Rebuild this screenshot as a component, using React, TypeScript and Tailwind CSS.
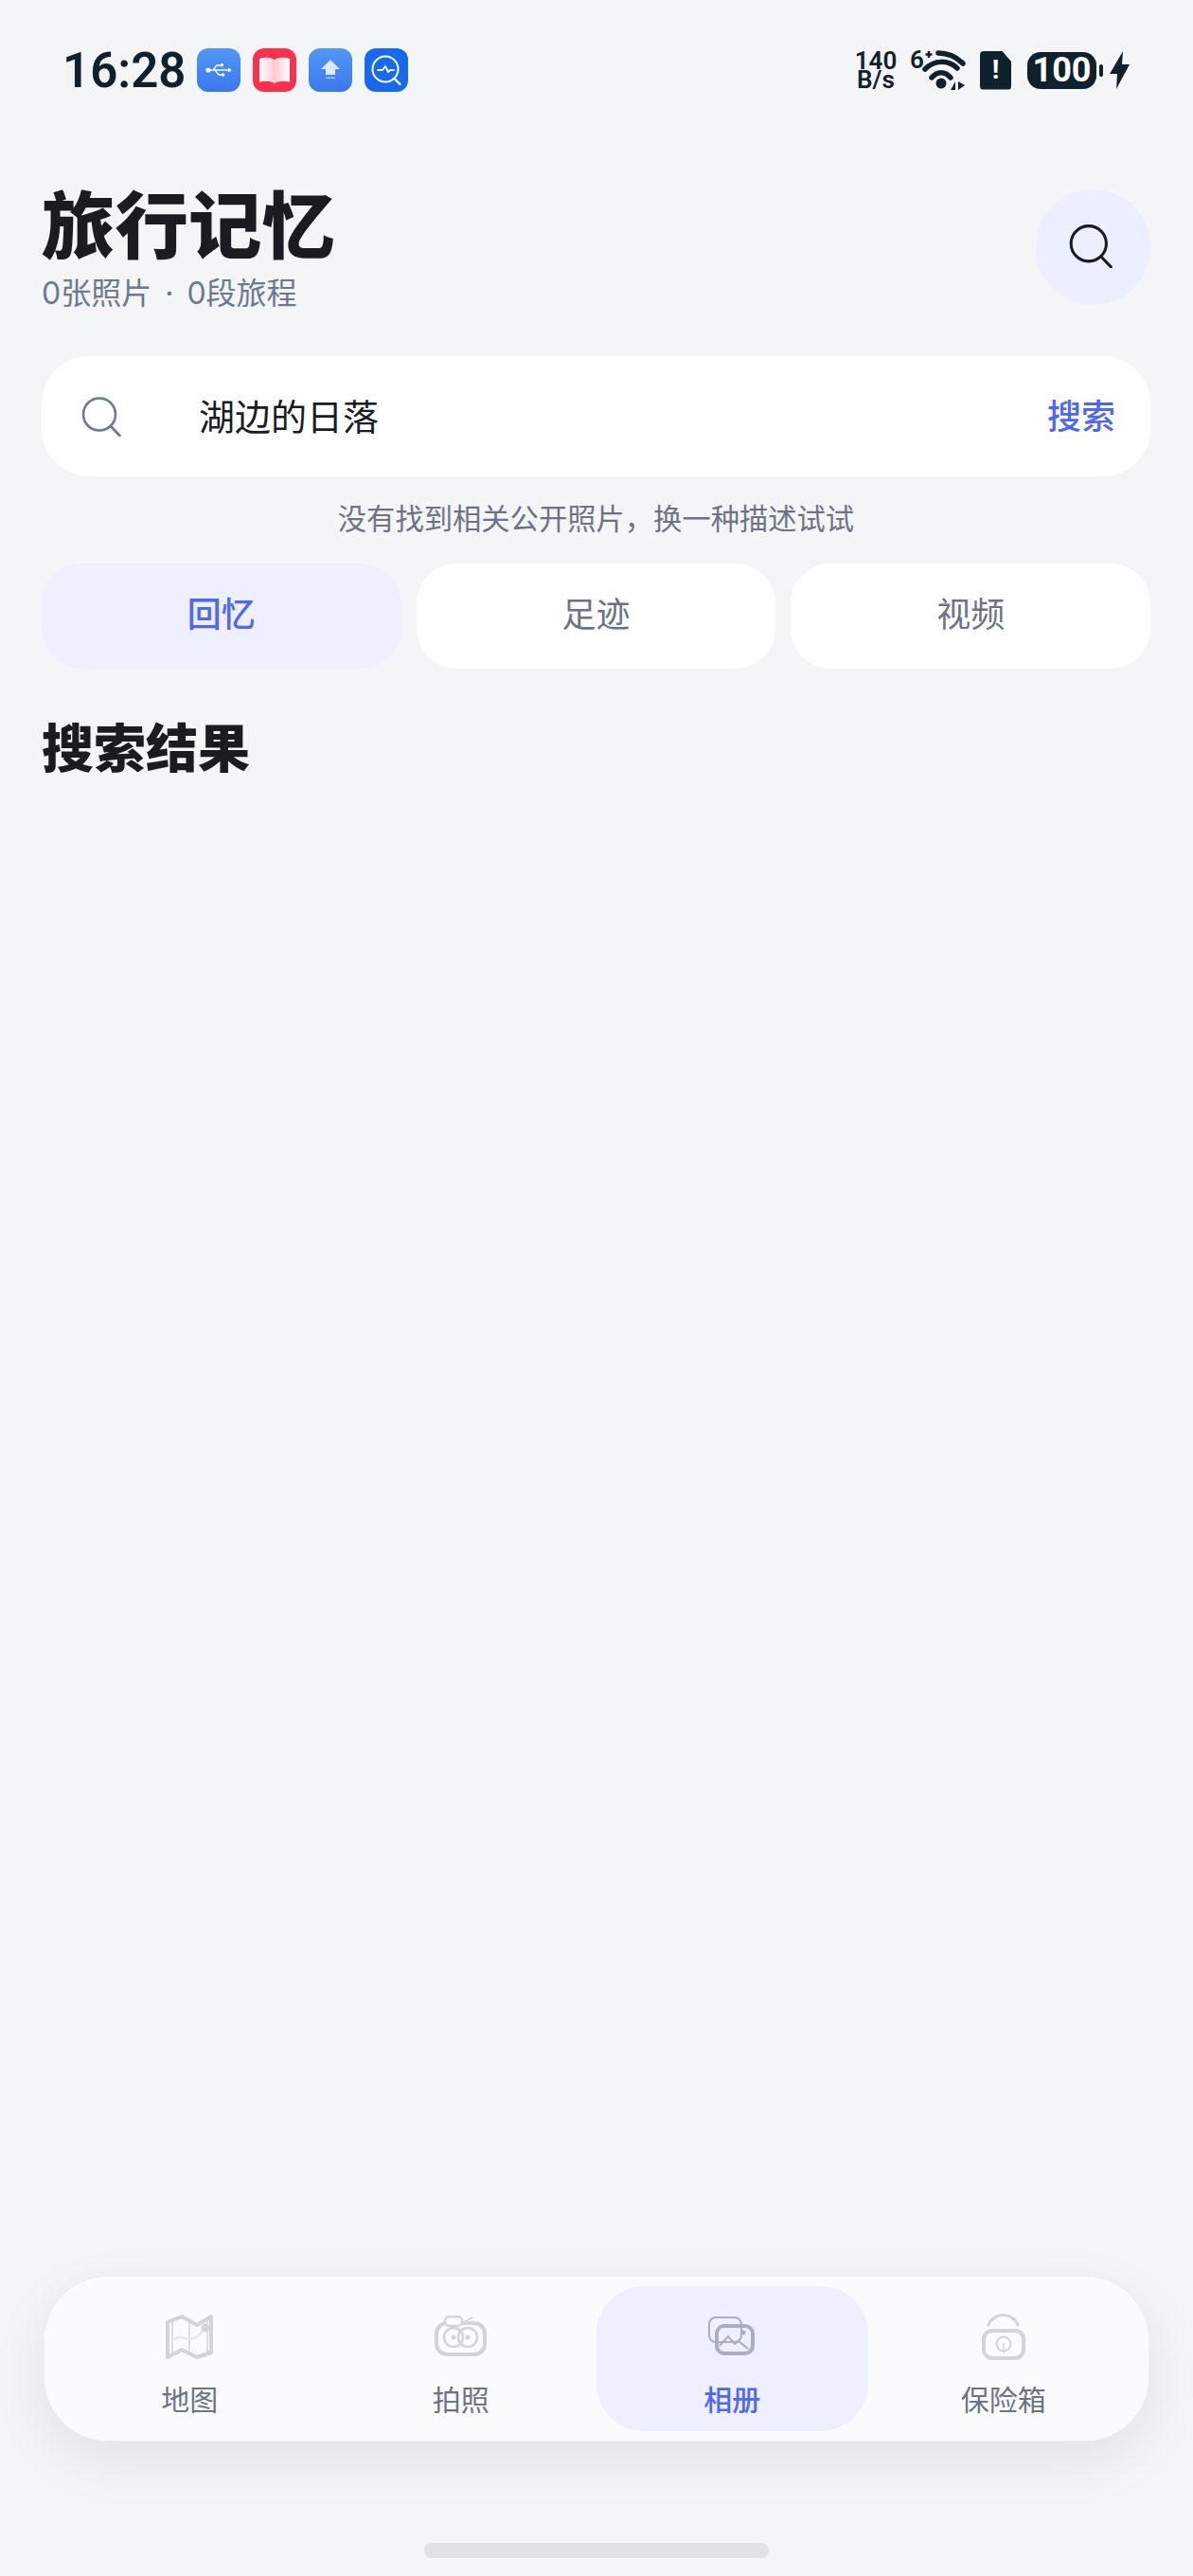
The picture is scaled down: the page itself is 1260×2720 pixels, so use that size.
const sans = `font-['Inter','Noto_Sans_CJK_SC',sans-serif]`

function SearchIcon({ className, strokeWidth = 2.6 }: { className: string; strokeWidth?: number }) {
  return (
    <svg viewBox="0 0 42 42" fill="none" stroke="currentColor" strokeWidth={strokeWidth} strokeLinecap="round" className={className}>
      <ellipse cx="19" cy="18.5" rx="17" ry="17" />
      <path d="M31 31 L40.5 41" />
    </svg>
  )
}

function StatusBar() {
  return (
    <div className="flex h-[148px] items-center justify-between pr-[67px] pl-[66px] text-[#10212e]">
      <div className="flex items-center">
        <span className="w-[142px] font-['Roboto',sans-serif] text-[51px] leading-none font-semibold">16:28</span>
        <div className="flex gap-[13px]">
          <div className="flex h-[46px] w-[46px] items-center justify-center rounded-[12px] bg-gradient-to-b from-[#5097f5] to-[#3b78ee]">
            <svg viewBox="0 0 28 16" className="w-[28px]" fill="#fff">
              <circle cx="3" cy="8" r="2.6" />
              <path d="M3 7.3h22v1.4H3z" />
              <path d="M28 8l-4-2.4v4.8z" />
              <path d="M8 8l4-5h4" fill="none" stroke="#fff" strokeWidth="1.3" />
              <path d="M10 8l4 5h3" fill="none" stroke="#fff" strokeWidth="1.3" />
              <rect x="16" y="1.3" width="3" height="3" />
              <circle cx="18.5" cy="13" r="1.8" />
            </svg>
          </div>
          <div className="flex h-[46px] w-[46px] items-center justify-center rounded-[12px] bg-[#fb3050]">
            <svg viewBox="0 0 34 30" className="w-[34px]">
              <defs>
                <linearGradient id="pageLeft" x1="0" x2="1" y1="0" y2="0">
                  <stop offset="0" stopColor="#fff" />
                  <stop offset="1" stopColor="#ffc9d3" />
                </linearGradient>
                <linearGradient id="pageRight" x1="0" x2="1" y1="0" y2="0">
                  <stop offset="0" stopColor="#ffc9d3" />
                  <stop offset="1" stopColor="#fff" />
                </linearGradient>
              </defs>
              <path d="M1 3c6-2 12-1.5 16 1v25c-4-2.5-10-3-16-1.5z" fill="url(#pageLeft)" />
              <path d="M33 3c-6-2-12-1.5-16 1v25c4-2.5 10-3 16-1.5z" fill="url(#pageRight)" />
            </svg>
          </div>
          <div className="flex h-[46px] w-[46px] items-center justify-center rounded-[12px] bg-gradient-to-b from-[#5097f5] to-[#3b78ee]">
            <svg viewBox="0 0 20 22" className="w-[20px]">
              <path d="M10 0L20 10h-5v6H5v-6H0z" fill="#dceafe" />
              <path d="M5 18.5h10V20H5z" fill="#a9c8fa" />
            </svg>
          </div>
          <div className="flex h-[46px] w-[46px] items-center justify-center rounded-[12px] bg-[#1769f2]">
            <svg viewBox="0 0 34 34" className="w-[34px]" fill="none" stroke="#fff" strokeLinecap="round" strokeLinejoin="round">
              <circle cx="16" cy="16" r="13.5" strokeWidth="2" />
              <path d="M25.5 26l6 6" strokeWidth="2.4" />
              <path d="M8 17h5l3-4 3 6 2-2h4" strokeWidth="1.8" />
            </svg>
          </div>
        </div>
      </div>

      <div className="flex items-center">
        <div className="flex w-[46px] flex-col items-center font-['Roboto',sans-serif] text-[26px] leading-[20px] font-semibold">
          <span>140</span>
          <span>B/s</span>
        </div>
        <svg viewBox="0 0 60 44" className="ml-[12px] h-[44px] w-[60px] overflow-visible" fill="none" stroke="#10212e" strokeLinecap="round">
          <path d="M31 4c10 0 19 4 26 11" strokeWidth="5.5" />
          <path d="M17 21c10-10 24-10 34-1" strokeWidth="5.5" />
          <path d="M24 30c6-7 14-7 20 0" strokeWidth="5.5" />
          <circle cx="34" cy="36" r="5.5" fill="#10212e" stroke="none" />
          <path d="M44 43l5-9v9zM52 34v9l7-5z" fill="#10212e" stroke="none" />
          <text x="1" y="20" fill="#10212e" stroke="none" fontSize="26" fontWeight="600" fontFamily="Roboto">6</text>
          <path d="M21 2v7M17.5 5.5h7" strokeWidth="2.5" strokeLinecap="butt" />
        </svg>
        <div className="ml-[15px] flex h-[41px] w-[33px] items-center justify-center rounded-[4px] bg-[#10212e] [clip-path:polygon(0_0,70%_0,100%_28%,100%_100%,0_100%)]">
          <span className="font-['Roboto',sans-serif] text-[28px] leading-none font-bold text-white">!</span>
        </div>
        <div className="ml-[17px] flex h-[39px] w-[73px] items-center justify-center rounded-[14px] bg-[#10212e] font-['Roboto',sans-serif] text-[36px] leading-none font-bold text-white">
          100
        </div>
        <div className="ml-[3px] h-[13px] w-[4px] rounded-[2px] bg-[#10212e]" />
        <svg viewBox="0 0 21 40" className="ml-[7px] h-[40px] w-[21px]" fill="#10212e">
          <path d="M14 0L0 24h8L7 40l14-26h-8z" />
        </svg>
      </div>
    </div>
  )
}

function MapIcon() {
  return (
    <svg viewBox="0 0 52 48" fill="none" className="h-[48px] w-[52px]">
      <path d="M3 9L18 3L34 12L49 3V41L34 46L18 38L3 46Z" stroke="#d0d5da" strokeWidth="4" strokeLinejoin="round" />
      <path d="M8 6V43M26 6V42M45 5V43" stroke="#d0d5da" strokeWidth="1.5" />
      <path d="M8 29c6-7 12-3 18-2 6 0 11-4 15-10" stroke="#e6eaec" strokeWidth="2.5" />
      <circle cx="43" cy="15" r="4.5" fill="#d0d5da" />
    </svg>
  )
}

function CameraIcon() {
  return (
    <svg viewBox="0 0 56 44" fill="none" className="h-[44px] w-[56px]">
      <rect x="2" y="8" width="51" height="33" rx="11" stroke="#d0d5da" strokeWidth="4" />
      <rect x="11" y="1" width="18" height="10" rx="5" fill="#fafbfd" stroke="#d0d5da" strokeWidth="2.5" />
      <path d="M29 8L40 2" stroke="#d0d5da" strokeWidth="1.5" />
      <circle cx="20" cy="23" r="10" stroke="#d0d5da" strokeWidth="2.5" />
      <circle cx="35" cy="23" r="10" stroke="#d0d5da" strokeWidth="2.5" />
      <circle cx="20" cy="23" r="2.5" fill="#d0d5da" />
      <circle cx="35" cy="23" r="2.5" fill="#d0d5da" />
    </svg>
  )
}

function AlbumIcon() {
  return (
    <svg viewBox="0 0 50 42" fill="none" className="h-[42px] w-[50px]">
      <rect x="1" y="1" width="34" height="26" rx="7" stroke="#a9afbb" strokeWidth="2" />
      <rect x="9" y="10" width="38" height="29" rx="8" stroke="#a9afbb" strokeWidth="4" />
      <path d="M12 31L21 21L28 29L32 26L42 34" stroke="#a9afbb" strokeWidth="2" />
      <circle cx="37" cy="17" r="2.5" fill="#a9afbb" />
    </svg>
  )
}

function LockIcon() {
  return (
    <svg viewBox="0 0 48 50" fill="none" className="h-[50px] w-[48px]">
      <path d="M8 13C13 -1 34 -1 39 13" stroke="#d0d5da" strokeWidth="3" strokeLinecap="round" />
      <rect x="3" y="19" width="42" height="29" rx="9" stroke="#d0d5da" strokeWidth="4" />
      <circle cx="24" cy="33" r="7.5" stroke="#d0d5da" strokeWidth="2" />
      <path d="M24 32V42" stroke="#d0d5da" strokeWidth="1.5" />
    </svg>
  )
}

const navItems = [
  { label: '地图', icon: <MapIcon />, active: false },
  { label: '拍照', icon: <CameraIcon />, active: false },
  { label: '相册', icon: <AlbumIcon />, active: true },
  { label: '保险箱', icon: <LockIcon />, active: false },
]

const tabs = [
  { label: '回忆', active: true },
  { label: '足迹', active: false },
  { label: '视频', active: false },
]

export default function App() {
  return (
    <div className={`flex h-[2720px] w-[1260px] flex-col overflow-hidden bg-[#f4f5f7] ${sans}`}>
      <StatusBar />

      <div className="pr-[45px] pl-[44px]">
        <div className="mt-[52px] flex justify-between">
          <div>
            <h1 className="text-[77.5px] leading-[78px] font-black text-[#1a1c22]">旅行记忆</h1>
            <p className="mt-[12px] text-[32px] leading-[40px] text-[#6b7a90]">
              0张照片<span className="mx-[14px]">·</span>0段旅程
            </p>
          </div>
          <button className="flex h-[122px] w-[121px] items-center justify-center rounded-full bg-[#eceffe] pr-[6px] pb-[2px] text-[#1a1c22]">
            <SearchIcon className="h-[46px] w-[46px]" strokeWidth={2.8} />
          </button>
        </div>

        <div className="mt-[46px] flex h-[127px] items-center rounded-[50px] bg-white pr-[37px] pl-[42px]">
          <SearchIcon className="h-[42px] w-[42px] text-[#6b7a90]" />
          <span className="ml-[82px] flex-1 text-[38px] leading-none text-[#1a1c22]">湖边的日落</span>
          <span className="text-[36px] leading-none font-medium text-[#4f67f5]">搜索</span>
        </div>

        <p className="mt-[25px] text-center text-[30.3px] leading-[40px] text-[#6b7486]">没有找到相关公开照片，换一种描述试试</p>

        <div className="mt-[27px] grid grid-cols-3 gap-[16px]">
          {tabs.map((tab) => (
            <div
              key={tab.label}
              className={`flex h-[111px] items-center justify-center rounded-[42px] pb-[3px] text-[36px] leading-none ${
                tab.active ? 'bg-[#eef0ff] font-medium text-[#4f67f5]' : 'bg-white text-[#6b7486]'
              }`}
            >
              {tab.label}
            </div>
          ))}
        </div>

        <h2 className="mt-[49px] text-[55px] leading-[70px] font-black text-[#1a1c22]">搜索结果</h2>
      </div>

      <div className="mt-auto px-[46px]">
        <div className="grid grid-cols-4 rounded-[68px] border border-[#eef0f4] bg-[#fafbfd] p-[10px] shadow-[0_20px_60px_rgba(0,0,0,0.08)]">
          {navItems.map((item) => (
            <div
              key={item.label}
              className={`flex h-[153px] flex-col items-center rounded-[50px] pt-[28px] ${item.active ? 'bg-[#eef0ff]' : ''}`}
            >
              <div className="flex h-[50px] items-center justify-center">{item.icon}</div>
              <span className={`mt-[24px] text-[30px] leading-[36px] ${item.active ? 'font-medium text-[#4f67f5]' : 'text-[#6b7486]'}`}>
                {item.label}
              </span>
            </div>
          ))}
        </div>
      </div>

      <div className="mx-auto mt-[107px] mb-[19px] h-[16px] w-[364px] rounded-[8px] bg-[#e1e2e4]" />
    </div>
  )
}
